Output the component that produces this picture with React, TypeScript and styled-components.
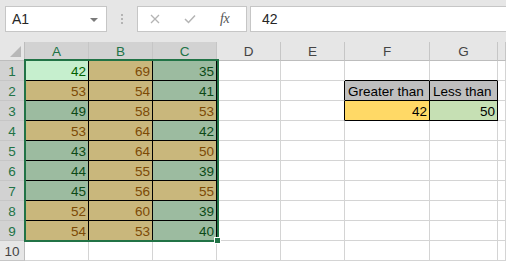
import React from "react";
import styled, { createGlobalStyle } from "styled-components";

const Global = createGlobalStyle`
  html, body { margin: 0; padding: 0; background: #ffffff; overflow: hidden; }
  body { font-family: "Liberation Sans", Arial, sans-serif; }
  * { box-sizing: border-box; }
`;

const Page = styled.div`
  width: 506px;
  height: 261px;
  overflow: hidden;
  background: #ffffff;
`;

const TopBar = styled.div`
  height: 42px;
  background: #e6e6e6;
  display: flex;
  align-items: flex-start;
  padding: 6px 0 0 5px;
`;

const NameBox = styled.div`
  width: 102px;
  height: 26px;
  background: #ffffff;
  border: 1px solid #c6c6c6;
  display: flex;
  align-items: center;
  justify-content: space-between;
  padding: 0 8px 0 6px;
  font-size: 14px;
  color: #262626;
`;

const Arrow = styled.span`
  width: 0;
  height: 0;
  border-left: 4px solid transparent;
  border-right: 4px solid transparent;
  border-top: 4px solid #7a7a7a;
  margin-top: 1px;
`;

const Dots = styled.div`
  width: 30px;
  height: 26px;
  display: flex;
  flex-direction: column;
  align-items: center;
  justify-content: center;
  gap: 2px;
  & > span {
    width: 2px;
    height: 2px;
    background: #b4b4b4;
  }
`;

const FxBox = styled.div`
  width: 110px;
  height: 26px;
  background: #ffffff;
  border: 1px solid #c6c6c6;
  display: flex;
  align-items: center;
  padding-left: 12px;
`;

const IconSlot = styled.div<{ $w: number }>`
  width: ${(p) => p.$w}px;
  display: flex;
  align-items: center;
  justify-content: flex-start;
`;

const Fx = styled.span`
  font-family: "Liberation Serif", "Times New Roman", serif;
  font-style: italic;
  font-size: 14px;
  color: #555555;
  letter-spacing: -0.5px;
`;

const ValueBox = styled.div`
  flex: 1;
  height: 26px;
  margin-left: 3px;
  margin-right: -2px;
  background: #ffffff;
  border: 1px solid #c6c6c6;
  display: flex;
  align-items: center;
  padding-left: 11px;
  font-size: 14px;
  color: #262626;
`;

const Sheet = styled.div`
  position: relative;
  display: grid;
  grid-template-columns: 25px 64px 64px 64px 64px 64px 85px 68px 1fr;
  grid-template-rows: 19px repeat(10, 20px);
  font-size: 13.5px;
`;

const Corner = styled.div`
  background: #e6e6e6;
  border-right: 1px solid #bdbdbd;
  border-bottom: 1px solid #bdbdbd;
  position: relative;
  &::after {
    content: "";
    position: absolute;
    right: 3px;
    bottom: 3px;
    width: 0;
    height: 0;
    border-left: 11px solid transparent;
    border-bottom: 11px solid #b8b8b8;
  }
`;

const ColHead = styled.div<{ $sel?: boolean }>`
  background: ${(p) => (p.$sel ? "#d2d2d2" : "#e6e6e6")};
  color: ${(p) => (p.$sel ? "#217346" : "#444444")};
  border-right: 1px solid #c6c6c6;
  border-bottom: 1px solid ${(p) => (p.$sel ? "#217346" : "#bdbdbd")};
  display: flex;
  align-items: center;
  justify-content: center;
  padding-top: 1px;
`;

const RowHead = styled.div<{ $sel?: boolean }>`
  background: ${(p) => (p.$sel ? "#d2d2d2" : "#e6e6e6")};
  color: ${(p) => (p.$sel ? "#217346" : "#444444")};
  border-right: 1px solid ${(p) => (p.$sel ? "#217346" : "#bdbdbd")};
  border-bottom: 1px solid #c6c6c6;
  display: flex;
  align-items: center;
  justify-content: center;
  padding-top: 1px;
`;

const Cell = styled.div<{ $bg: string; $fg: string; $br: string; $bb: string; $align: string }>`
  background: ${(p) => p.$bg};
  color: ${(p) => p.$fg};
  border-right: 1px solid ${(p) => p.$br};
  border-bottom: 1px solid ${(p) => p.$bb};
  display: flex;
  align-items: center;
  justify-content: ${(p) => p.$align};
  padding: 1px 2px 0 3px;
  white-space: nowrap;
  overflow: hidden;
`;

const Selection = styled.div`
  position: absolute;
  left: 24px;
  top: 17px;
  width: 195px;
  height: 183px;
  border: 2px solid #217346;
  pointer-events: none;
`;

const Handle = styled.div`
  position: absolute;
  left: 214px;
  top: 195px;
  width: 7px;
  height: 7px;
  background: #217346;
  border: 1px solid #ffffff;
  pointer-events: none;
`;

const data = [
  [42, 69, 35],
  [53, 54, 41],
  [49, 58, 53],
  [53, 64, 42],
  [43, 64, 50],
  [44, 55, 39],
  [45, 56, 55],
  [52, 60, 39],
  [54, 53, 40],
];

const cols = ["A", "B", "C", "D", "E", "F", "G", ""];
const GRID = "#d4d4d4";
const BLACK = "#000000";

type CellSpec = { text: string; bg: string; fg: string; align: string };

function spec(r: number, c: number): CellSpec {
  if (r <= 9 && c <= 3) {
    const v = data[r - 1][c - 1];
    if (r === 1 && c === 1) return { text: String(v), bg: "#c6efce", fg: "#006100", align: "flex-end" };
    if (v < 50) return { text: String(v), bg: "#9cbba0", fg: "#0b4a16", align: "flex-end" };
    return { text: String(v), bg: "#c9b77c", fg: "#7c4a06", align: "flex-end" };
  }
  if (r === 2 && c === 6) return { text: "Greater than", bg: "#bfbfbf", fg: "#000000", align: "flex-start" };
  if (r === 2 && c === 7) return { text: "Less than", bg: "#bfbfbf", fg: "#000000", align: "flex-start" };
  if (r === 3 && c === 6) return { text: "42", bg: "#ffd966", fg: "#000000", align: "flex-end" };
  if (r === 3 && c === 7) return { text: "50", bg: "#c6e0b4", fg: "#000000", align: "flex-end" };
  return { text: "", bg: "#ffffff", fg: "#000000", align: "flex-end" };
}

function rightColor(r: number, c: number): string {
  if (r <= 9 && c <= 3) return BLACK;
  if ((r === 2 || r === 3) && c >= 5 && c <= 7) return BLACK;
  return GRID;
}

function bottomColor(r: number, c: number): string {
  if (r <= 9 && c <= 3) return BLACK;
  if (r >= 1 && r <= 3 && (c === 6 || c === 7)) return BLACK;
  return GRID;
}

const XIcon = () => (
  <svg width="10" height="10" viewBox="0 0 10 10">
    <path d="M1 1 L9 9 M9 1 L1 9" stroke="#b4b4b4" strokeWidth="1.3" fill="none" />
  </svg>
);

const CheckIcon = () => (
  <svg width="12" height="10" viewBox="0 0 12 10">
    <path d="M1 5 L4.5 8.5 L11 1.5" stroke="#b4b4b4" strokeWidth="1.5" fill="none" />
  </svg>
);

export default function App() {
  const rows = Array.from({ length: 10 }, (_, i) => i + 1);
  return (
    <Page>
      <Global />
      <TopBar>
        <NameBox>
          <span>A1</span>
          <Arrow />
        </NameBox>
        <Dots>
          <span />
          <span />
          <span />
        </Dots>
        <FxBox>
          <IconSlot $w={34}>
            <XIcon />
          </IconSlot>
          <IconSlot $w={36}>
            <CheckIcon />
          </IconSlot>
          <IconSlot $w={20}>
            <Fx>fx</Fx>
          </IconSlot>
        </FxBox>
        <ValueBox>42</ValueBox>
      </TopBar>
      <Sheet>
        <Corner />
        {cols.map((c, i) => (
          <ColHead key={"h" + i} $sel={i < 3}>
            {c}
          </ColHead>
        ))}
        {rows.map((r) => (
          <React.Fragment key={r}>
            <RowHead $sel={r <= 9}>{r}</RowHead>
            {cols.map((_, ci) => {
              const c = ci + 1;
              const s = spec(r, c);
              return (
                <Cell
                  key={r + "-" + c}
                  $bg={s.bg}
                  $fg={s.fg}
                  $br={rightColor(r, c)}
                  $bb={bottomColor(r, c)}
                  $align={s.align}
                >
                  {s.text}
                </Cell>
              );
            })}
          </React.Fragment>
        ))}
        <Selection />
        <Handle />
      </Sheet>
    </Page>
  );
}
